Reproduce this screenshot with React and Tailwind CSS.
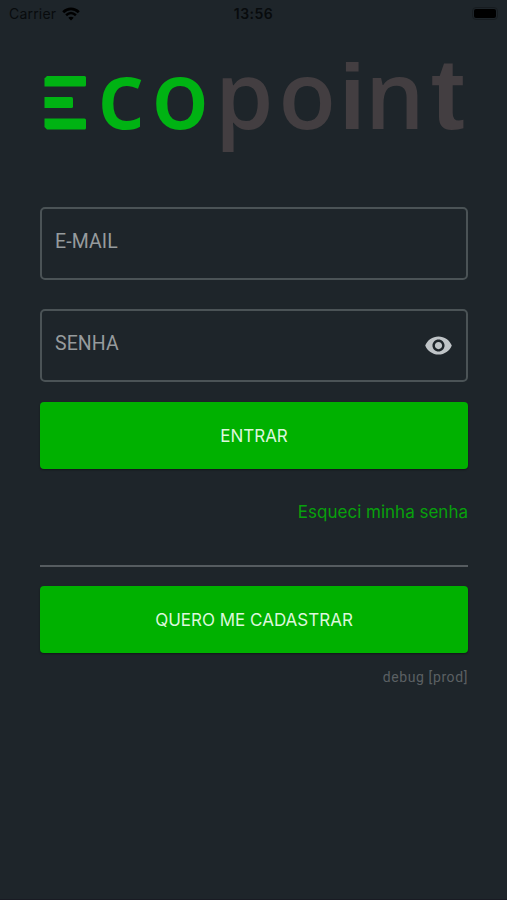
import React from "react";

const StatusBar = () => {
  return (
    <header className="flex h-7 items-center justify-between pl-[9px] pr-[9px] font-['Inter',sans-serif] text-[#080b0d]">
      <div className="flex w-40 items-center gap-[6px] pb-px">
        <span className="text-[14px] tracking-[0.2px]">Carrier</span>
        <WifiIcon />
      </div>
      <span className="pb-px text-[14px] font-semibold tracking-[0.5px]">13:56</span>
      <div className="flex w-40 justify-end pb-px">
        <div className="rounded-[4px] border border-[#171c20] p-px">
          <div className="h-[9px] w-[22px] rounded-[2px] bg-black"></div>
        </div>
      </div>
    </header>
  );
};

const WifiIcon = () => {
  return (
    <svg width="18" height="14" viewBox="0 0 18 14" fill="none" stroke="#000">
      <path d="M1.2 5.2C5.8.7 12.2.7 16.8 5.2" strokeWidth="2.8" />
      <path d="M4.1 8.2c3-2.7 6.8-2.7 9.8 0" strokeWidth="2.5" />
      <path d="M9 13.5 6.3 10.8c1.5-1.3 3.9-1.3 5.4 0z" fill="#000" stroke="none" />
    </svg>
  );
};

const Logo = () => {
  return (
    <svg
      className="block h-[110px] w-full overflow-visible"
      viewBox="40 46 428 110"
      aria-label="Ecopoint"
    >
      {/* three bars of the E */}
      <g fill="#00b313">
        <path d="M47 76h37.5a1.5 1.5 0 0 1 1.5 1.5v7.5a1.5 1.5 0 0 1-1.5 1.5H44.5v-8z" />
        <path d="M44.5 97h27a1.5 1.5 0 0 1 1.5 1.5v8a1.5 1.5 0 0 1-1.5 1.5h-27z" />
        <path d="M44.5 118.5h40a1.5 1.5 0 0 1 1.5 1.5v8a1.5 1.5 0 0 1-1.5 1.5H47l-2.5-2.5z" />
      </g>
      <g className="font-['Open_Sans',sans-serif] text-[94px] font-semibold">
        <text x="97.5 151.5" y="128.5" fill="#00b313">
          co
        </text>
        <text x="215 278.5" y="128.5" fill="#433e41">
          po
        </text>
        <text x="365" y="128.5" fill="#433e41">
          n
        </text>
      </g>
      <g className="font-['Liberation_Sans',sans-serif] font-bold" fill="#433e41">
        <text x="339.5" y="128.5" className="text-[92px]">
          i
        </text>
        <text x="431" y="128.5" className="text-[101px]">
          t
        </text>
      </g>
    </svg>
  );
};

const Field = ({ label, children }) => {
  return (
    <div className="flex h-[73px] items-center justify-between rounded-[5px] border-2 border-[#4b5356] pl-[13px] pr-[13px]">
      <span className="pb-[4px] font-['Roboto',sans-serif] text-[19.5px] tracking-[0.1px] text-[#969b9d]">
        {label}
      </span>
      {children}
    </div>
  );
};

const EyeIcon = () => {
  return (
    <svg width="29" height="29" viewBox="0 0 24 24" fill="#bfc4c7">
      <path d="M12 4.5C7 4.5 2.73 7.61 1 12c1.73 4.39 6 7.5 11 7.5s9.27-3.11 11-7.5c-1.73-4.39-6-7.5-11-7.5zM12 17c-2.76 0-5-2.24-5-5s2.24-5 5-5 5 2.24 5 5-2.24 5-5 5zm0-8c-1.66 0-3 1.34-3 3s1.34 3 3 3 3-1.34 3-3-1.34-3-3-3z" />
    </svg>
  );
};

const Button = ({ children }) => {
  return (
    <button className="h-[67px] w-full rounded-[4px] bg-[#00b100] pt-[2px] font-['Inter',sans-serif] text-[17px] text-[#dcf7dc] shadow-[0_1px_2px_rgba(0,0,0,0.4)]">
      {children}
    </button>
  );
};

const App = () => {
  return (
    <div className="flex h-[900px] w-full flex-col overflow-hidden border-b border-[#191b23] bg-[#1e252a]">
      <StatusBar />
      <main className="flex flex-col pt-[18px] pr-[39px] pl-10">
        <Logo />
        <div className="mt-[51px] flex flex-col gap-[29px]">
          <Field label="E-MAIL" />
          <Field label="SENHA">
            <EyeIcon />
          </Field>
        </div>
        <div className="mt-5">
          <Button>ENTRAR</Button>
        </div>
        <a className="mt-[31px] self-end font-['Inter',sans-serif] text-[17px] leading-6 text-[#08a00c]">
          Esqueci minha senha
        </a>
        <hr className="mt-[41px] mb-[19px] border-t-2 border-[#565c60]" />
        <Button>QUERO ME CADASTRAR</Button>
        <span className="mt-[14px] self-end font-['Roboto',sans-serif] text-[14px] leading-5 tracking-[0.6px] text-[#5b6063]">
          debug [prod]
        </span>
      </main>
    </div>
  );
};

export default App;
